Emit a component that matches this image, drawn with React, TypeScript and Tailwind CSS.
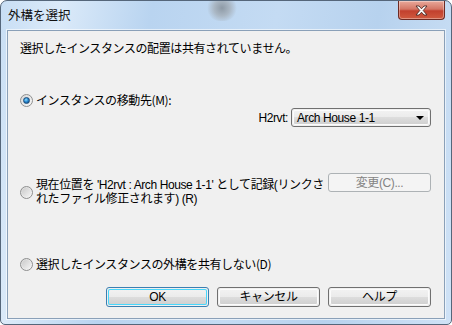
import React from "react";

const font = { fontFamily: '"Liberation Sans", "Noto Sans CJK JP", sans-serif' };

function Radio({ checked }: { checked?: boolean }) {
  return (
    <div className="w-[13px] h-[13px] rounded-full border border-[#8e8f8f] bg-[linear-gradient(135deg,#d8d8d8,#f8f8f8)] flex items-center justify-center shrink-0">
      {checked ? (
        <div className="w-[7px] h-[7px] rounded-full bg-[radial-gradient(circle_at_40%_35%,#8ee0fb_0%,#2a8ad4_45%,#0d3d6b_100%)] border border-[#1b4c7a]" />
      ) : (
        <div className="w-[9px] h-[9px] rounded-full bg-[linear-gradient(135deg,#cbcbcb,#f4f4f4)]" />
      )}
    </div>
  );
}

function Btn({ children, def, disabled }: { children: React.ReactNode; def?: boolean; disabled?: boolean }) {
  if (disabled) {
    return (
      <div className="w-[103px] h-[19px] rounded-[3px] border border-[#adb2b5] bg-[#f4f4f4] flex items-center justify-center text-[12px] text-[#838383]">
        {children}
      </div>
    );
  }
  return (
    <div
      className={
        "w-[103px] h-[20px] rounded-[3px] border flex p-px " +
        (def ? "border-[#3c7fb1]" : "border-[#707070]")
      }
    >
      <div
        className={
          "flex-1 rounded-[2px] flex items-center justify-center text-[12px] text-black bg-[linear-gradient(#f2f2f2_0%,#ebebeb_50%,#dddddd_50%,#cfcfcf_100%)] " +
          (def ? "shadow-[inset_0_0_0_1px_#48d7fb]" : "shadow-[inset_0_0_0_1px_#fcfcfc]")
        }
      >
        {children}
      </div>
    </div>
  );
}

export default function App() {
  return (
    <div className="w-[452px] h-[325px] bg-white" style={font}>
      <div className="relative w-[452px] h-[325px] rounded-t-[7px] rounded-b-[5px] border border-[#55667a] bg-[linear-gradient(100deg,#c8def4_0%,#dbeaf9_12%,#b9d4f0_30%,#c4dbf3_55%,#b7d2ee_75%,#cfe2f6_100%)] flex flex-col overflow-hidden">
        <div className="absolute left-[206px] top-[-6px] w-[30px] h-[26px] rounded-full bg-[radial-gradient(circle,#8e9aa6_0%,#aab7c4_40%,rgba(190,210,235,0)_75%)]" />
        <div className="h-[29px] flex items-start justify-between shrink-0 relative">
          <div className="pl-[7px] pt-[6px] text-[12.5px] text-[#111] leading-[16px]" style={{ fontFamily: '"Noto Sans CJK JP", sans-serif' }}>
            外構を選択
          </div>
          <div className="mr-[6px] w-[47px] h-[19px] rounded-b-[4px] border border-t-0 border-[#6d2a23] bg-[linear-gradient(#e9a99b_0%,#d47665_45%,#c2402e_55%,#d05a3f_100%)] flex items-center justify-center shadow-[inset_0_0_0_1px_rgba(255,255,255,0.35)]">
            <svg width="13" height="11" viewBox="0 0 13 11">
              <path d="M1 1 L4 1 L6.5 3.8 L9 1 L12 1 L8.2 5.5 L12 10 L9 10 L6.5 7.2 L4 10 L1 10 L4.8 5.5 Z" fill="#fff" stroke="#4b2a26" strokeWidth="0.9" strokeLinejoin="round" />
            </svg>
          </div>
        </div>
        <div className="mx-[6px] h-[289px] border border-[#8aa0b8] shadow-[0_0_0_1px_rgba(255,255,255,0.6)] bg-[#f0f0f0] flex flex-col pl-[12px] pr-[12px] text-[12px] text-black leading-[14px]" style={{ letterSpacing: "-0.4px" }}>
          <div className="mt-[10px]" style={{ fontFamily: '"Noto Sans CJK JP", sans-serif' }}>選択したインスタンスの配置は共有されていません。</div>
          <div className="mt-[38px] flex items-center gap-[3px]">
            <Radio checked />
            <span style={{ fontFamily: '"Noto Sans CJK JP", sans-serif' }}>インスタンスの移動先(M):</span>
          </div>
          <div className="mt-[1px] flex items-center justify-end gap-[3px] pr-[1px]">
            <span>H2rvt:</span>
            <div className="w-[140px] h-[19px] rounded-[3px] border border-[#707070] p-px flex">
              <div className="flex-1 rounded-[2px] bg-[linear-gradient(#f2f2f2_0%,#ebebeb_50%,#dddddd_50%,#cfcfcf_100%)] shadow-[inset_0_0_0_1px_#fcfcfc] flex items-center justify-between pl-[4px] pr-[5px]">
                <span>Arch House 1-1</span>
                <svg width="8" height="4" viewBox="0 0 8 4"><path d="M0 0 L8 0 L4 4 Z" fill="#000" /></svg>
              </div>
            </div>
          </div>
          <div className="mt-[50px] flex items-start justify-between">
            <div className="flex items-center gap-[3px] pt-[1px]">
              <Radio />
              <div className="w-[292px] leading-[14px]" style={{ fontFamily: '"Liberation Sans", "Noto Sans CJK JP", sans-serif' }}>
                現在位置を 'H2rvt : Arch House 1-1' として記録(リンクされたファイル修正されます) (R)
              </div>
            </div>
            <div className="mt-[-4px] mr-[1px]">
              <Btn disabled>変更(C)...</Btn>
            </div>
          </div>
          <div className="mt-[51px] flex items-center gap-[3px]">
            <Radio />
            <span style={{ fontFamily: '"Noto Sans CJK JP", sans-serif' }}>選択したインスタンスの外構を共有しない(D)</span>
          </div>
          <div className="mt-[16px] flex justify-end gap-[8px] pr-[1px]">
            <Btn def>OK</Btn>
            <Btn>キャンセル</Btn>
            <Btn>ヘルプ</Btn>
          </div>
        </div>
      </div>
    </div>
  );
}
